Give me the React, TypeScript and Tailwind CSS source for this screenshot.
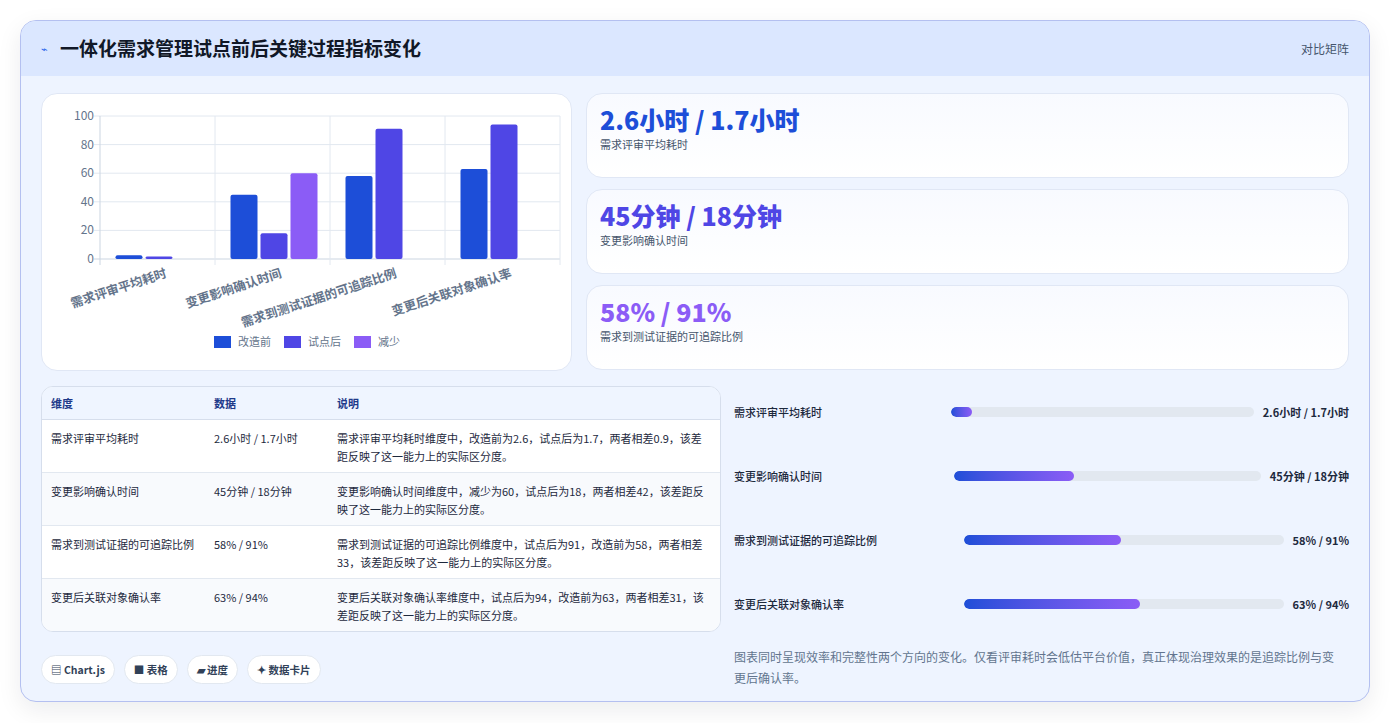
const font = { fontFamily: '"Noto Sans CJK SC", "Noto Sans", sans-serif' };

const cats = ["需求评审平均耗时", "变更影响确认时间", "需求到测试证据的可追踪比例", "变更后关联对象确认率"];
const series = [
  { name: "改造前", color: "#1d4ed8", values: [2.6, 45, 58, 63] },
  { name: "试点后", color: "#4f46e5", values: [1.7, 18, 91, 94] },
  { name: "减少", color: "#8b5cf6", values: [0, 60, 0, 0] },
];

function Chart() {
  const x0 = 98, x1 = 558, yTop = 115, yBot = 258;
  const cw = (x1 - x0) / 4;
  const y = (v: number) => yBot - ((yBot - yTop) * v) / 100;
  return (
    <svg width="531" height="278" viewBox="40 93 531 278" className="block">
      {[0, 20, 40, 60, 80, 100].map((t) => (
        <g key={t}>
          <line x1={x0 - 6} x2={x1} y1={y(t)} y2={y(t)} stroke={t === 0 ? "#cbd5e1" : "#e2e8f0"} />
          <text x={x0 - 6} y={y(t) + 4} textAnchor="end" fontSize="12" fill="#64748b">{t}</text>
        </g>
      ))}
      {[0, 1, 2, 3, 4].map((i) => (
        <line key={i} x1={x0 + i * cw} x2={x0 + i * cw} y1={yTop} y2={yBot + 6} stroke={i === 0 ? "#cbd5e1" : "#e2e8f0"} />
      ))}
      {cats.map((c, i) => {
        const cx = x0 + i * cw + cw / 2 + 2;
        return (
          <g key={c}>
            {series.map((s, j) =>
              s.values[i] > 0 ? (
                <rect key={j} x={cx - 44 + j * 30} y={y(s.values[i])} width="27" height={yBot - y(s.values[i])} rx="2" fill={s.color} />
              ) : null
            )}
            <text
              x={cx + 8}
              y={yBot + 18}
              textAnchor="end"
              fontSize="12.5"
              fontWeight="600"
              fill="#64748b"
              transform={`rotate(-18 ${cx + 8} ${yBot + 18})`}
            >
              {c}
            </text>
          </g>
        );
      })}
      {series.map((s, j) => (
        <g key={s.name}>
          <rect x={212 + j * 70} y={335} width="17" height="12" fill={s.color} />
          <text x={236 + j * 70} y={345} fontSize="11" fill="#64748b">{s.name}</text>
        </g>
      ))}
    </svg>
  );
}

const stats = [
  { v: "2.6小时 / 1.7小时", l: "需求评审平均耗时", c: "text-[#1d4ed8]" },
  { v: "45分钟 / 18分钟", l: "变更影响确认时间", c: "text-[#4f46e5]" },
  { v: "58% / 91%", l: "需求到测试证据的可追踪比例", c: "text-[#8b5cf6]" },
];

const rows = [
  ["需求评审平均耗时", "2.6小时 / 1.7小时", "需求评审平均耗时维度中，改造前为2.6，试点后为1.7，两者相差0.9，该差距反映了这一能力上的实际区分度。"],
  ["变更影响确认时间", "45分钟 / 18分钟", "变更影响确认时间维度中，减少为60，试点后为18，两者相差42，该差距反映了这一能力上的实际区分度。"],
  ["需求到测试证据的可追踪比例", "58% / 91%", "需求到测试证据的可追踪比例维度中，试点后为91，改造前为58，两者相差33，该差距反映了这一能力上的实际区分度。"],
  ["变更后关联对象确认率", "63% / 94%", "变更后关联对象确认率维度中，试点后为94，改造前为63，两者相差31，该差距反映了这一能力上的实际区分度。"],
];

const bars = [
  { l: "需求评审平均耗时", v: "2.6小时 / 1.7小时", p: 7, lw: "w-[208px]" },
  { l: "变更影响确认时间", v: "45分钟 / 18分钟", p: 39, lw: "w-[211px]" },
  { l: "需求到测试证据的可追踪比例", v: "58% / 91%", p: 49, lw: "w-[221px]" },
  { l: "变更后关联对象确认率", v: "63% / 94%", p: 55, lw: "w-[221px]" },
];

export default function App() {
  return (
    <div style={font} className="w-[1390px] h-[723px] bg-white p-5 text-slate-800">
      <div className="h-[682px] rounded-2xl border border-[#b4c0f0] bg-[#eef4ff] overflow-hidden shadow-[0_8px_24px_rgba(15,23,42,0.08)]">
        <div className="h-[55px] bg-[#dbe7ff] flex items-center justify-between px-5">
          <div className="flex items-center gap-3">
            <span className="text-[11px] text-[#2563eb]">⌁</span>
            <h1 className="text-[19px] font-bold text-[#111827]">一体化需求管理试点前后关键过程指标变化</h1>
          </div>
          <span className="text-[12px] text-slate-600">对比矩阵</span>
        </div>
        <div className="px-5 pt-[17px]">
          <div className="flex gap-[14px]">
            <div className="w-[531px] h-[278px] rounded-2xl bg-white border border-[#e0e7f5] overflow-hidden">
              <Chart />
            </div>
            <div className="flex-1 flex flex-col gap-[11px]">
              {stats.map((s) => (
                <div key={s.l} className="h-[85px] rounded-2xl border border-[#e0e7f5] bg-gradient-to-b from-[#f8faff] to-white px-[13px] pt-[9px]">
                  <div className={`text-[25px] leading-[32px] font-extrabold ${s.c}`}>{s.v}</div>
                  <div className="text-[11px] text-slate-600 mt-[1px]">{s.l}</div>
                </div>
              ))}
            </div>
          </div>
          <div className="flex gap-[13px] mt-[15px]">
            <div className="w-[680px]">
              <div className="rounded-xl border border-[#d6deec] overflow-hidden bg-white">
                <table className="w-full text-[11px] border-collapse">
                  <thead>
                    <tr className="bg-[#eff5ff] text-[#1e3a8a] font-semibold h-[32px] border-b border-[#d6deec]">
                      <td className="pl-[9px] w-[172px]">维度</td>
                      <td className="w-[123px]">数据</td>
                      <td>说明</td>
                    </tr>
                  </thead>
                  <tbody>
                    {rows.map((r, i) => (
                      <tr key={i} className={`align-top h-[53px] ${i % 2 ? "bg-[#f8fafd]" : "bg-white"} ${i < 3 ? "border-b border-[#e2e8f0]" : ""}`}>
                        <td className="pl-[9px] pr-3 pt-[9px] leading-[18px]">{r[0]}</td>
                        <td className="pt-[9px] leading-[18px]">{r[1]}</td>
                        <td className="pt-[9px] pr-[8px] leading-[18px]">{r[2]}</td>
                      </tr>
                    ))}
                  </tbody>
                </table>
              </div>
              <div className="flex gap-[9px] mt-[23px]">
                {["▤ Chart.js", "■ 表格", "▰ 进度", "✦ 数据卡片"].map((c) => (
                  <span key={c} className="h-[29px] px-[9px] rounded-full bg-white border border-[#e2e8f0] text-[10.5px] font-semibold text-slate-700 flex items-center">{c}</span>
                ))}
              </div>
            </div>
            <div className="flex-1 flex flex-col">
              <div className="flex flex-col -mt-[6px]">
                {bars.map((b) => (
                  <div key={b.l} className="h-[64px] flex items-center gap-[9px]">
                    <span className={`${b.lw} text-[11px] font-medium shrink-0`}>{b.l}</span>
                    <div className="flex-1 h-[10px] rounded-full bg-[#e2e8f0] overflow-hidden">
                      <div className="h-full rounded-full bg-gradient-to-r from-[#1d4ed8] to-[#8b5cf6]" style={{ width: `${b.p}%` }} />
                    </div>
                    <span className="text-[11px] font-bold shrink-0">{b.v}</span>
                  </div>
                ))}
              </div>
              <p className="text-[12px] leading-[21px] text-slate-500 mt-[10px] pr-[4px]">
                图表同时呈现效率和完整性两个方向的变化。仅看评审耗时会低估平台价值，真正体现治理效果的是追踪比例与变更后确认率。
              </p>
            </div>
          </div>
        </div>
      </div>
    </div>
  );
}
